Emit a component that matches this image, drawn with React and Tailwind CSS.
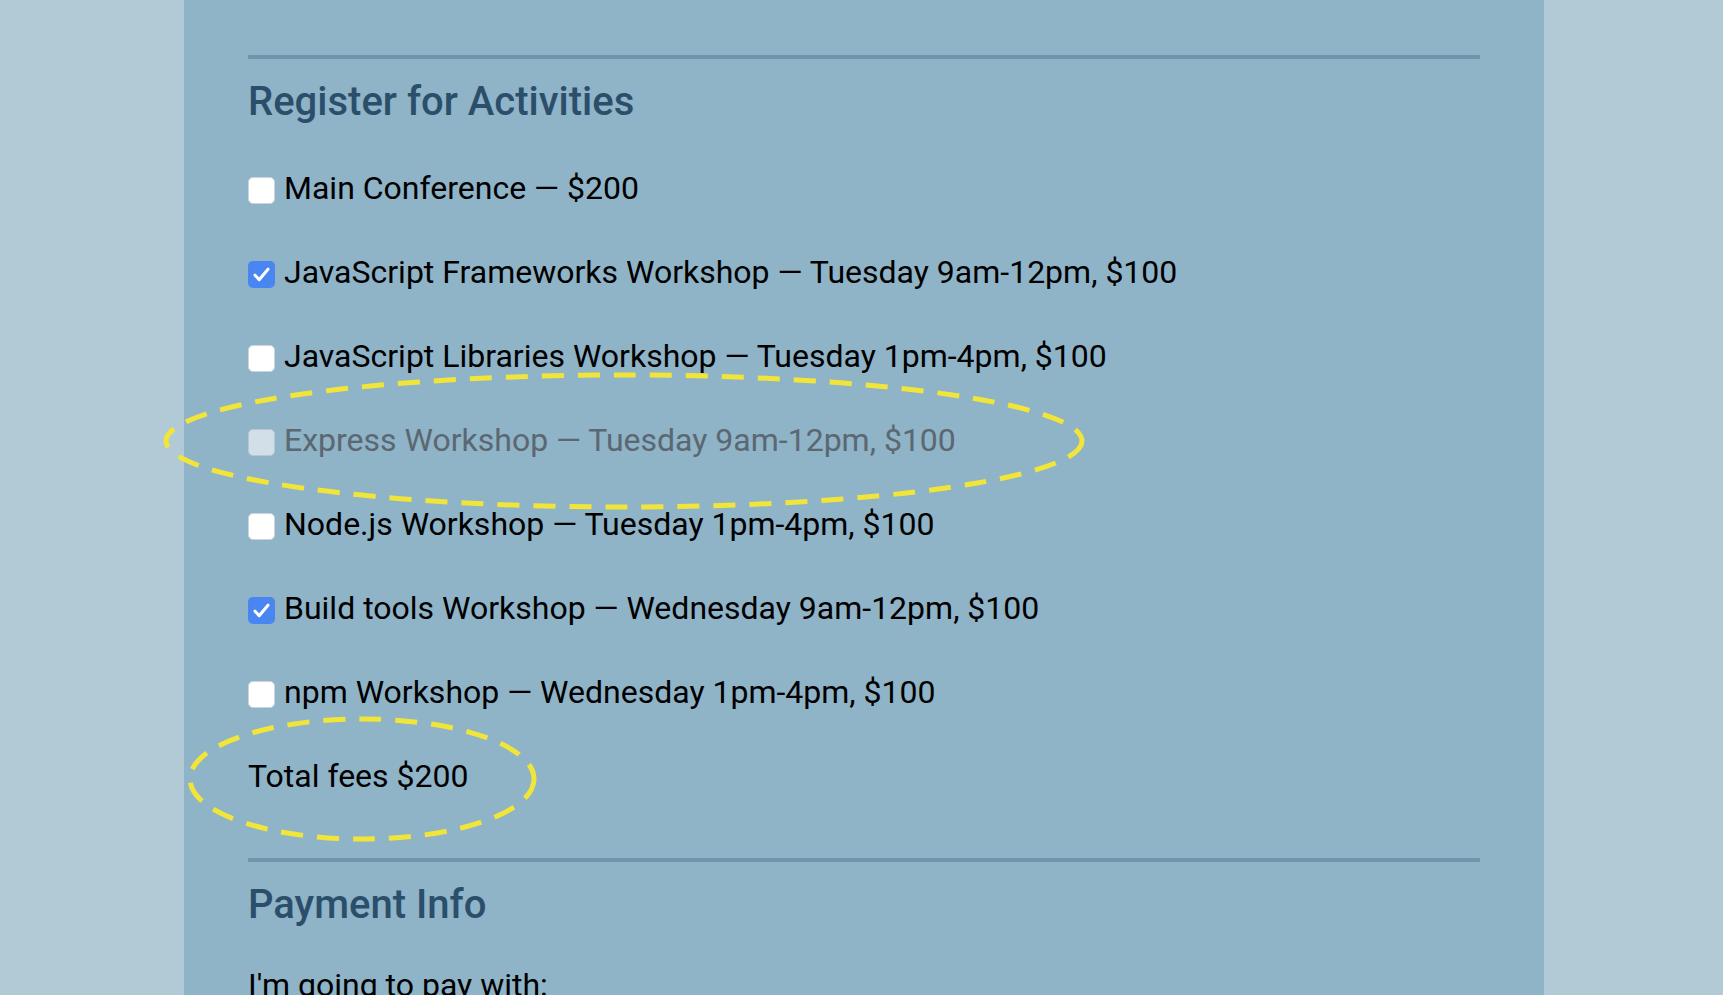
const activities = [
  { label: "Main Conference — $200" },
  { label: "JavaScript Frameworks Workshop — Tuesday 9am-12pm, $100", checked: true },
  { label: "JavaScript Libraries Workshop — Tuesday 1pm-4pm, $100" },
  { label: "Express Workshop — Tuesday 9am-12pm, $100", disabled: true },
  { label: "Node.js Workshop — Tuesday 1pm-4pm, $100" },
  { label: "Build tools Workshop — Wednesday 9am-12pm, $100", checked: true },
  { label: "npm Workshop — Wednesday 1pm-4pm, $100" },
];

const Box = ({ checked, disabled }) => {
  if (checked) {
    return (
      <span className="mt-[5px] flex h-[27px] w-[27px] shrink-0 items-center justify-center rounded-[5px] bg-[#4a86f2]">
        <svg width="27" height="27" viewBox="0 0 27 27" fill="none">
          <path d="M7 14.2l4.2 4.6L20 8.2" stroke="white" strokeWidth="3" strokeLinecap="round" strokeLinejoin="round" />
        </svg>
      </span>
    );
  }
  return (
    <span
      className={
        disabled
          ? "mt-[5px] h-[27px] w-[27px] shrink-0 rounded-[5px] border border-[#b7c8d4] bg-[#d2dfe8]"
          : "mt-[5px] h-[27px] w-[27px] shrink-0 rounded-[5px] border border-[#c9d6de] bg-white"
      }
    />
  );
};

const Heading = ({ children }) => (
  <div className="flex h-[87px] items-center pb-[1px]">
    <h2 className="text-[40px] font-medium leading-none text-[#2b4f6b]">{children}</h2>
  </div>
);

export default function App() {
  return (
    <div className="relative h-[995px] overflow-hidden bg-[#b2c9d6] font-['Roboto',sans-serif]">
      <div className="ml-[184px] h-full w-[1360px] bg-[#8fb3c7] px-[64px] pt-[55px]">
        <div className="h-[4px] bg-[#6f95ad]" />
        <Heading>Register for Activities</Heading>
        {activities.map((a) => (
          <label key={a.label} className="flex h-[84px] items-center gap-[9px]">
            <Box checked={a.checked} disabled={a.disabled} />
            <span className={a.disabled ? "text-[32px] text-[#5b6771]" : "text-[32px] text-black"}>{a.label}</span>
          </label>
        ))}
        <p className="flex h-[84px] items-center text-[32px] text-black">Total fees $200</p>
        <div className="mt-[40px] h-[4px] bg-[#6f95ad]" />
        <Heading>Payment Info</Heading>
        <p className="-mt-[6px] flex h-[84px] items-center text-[32px] text-black">I'm going to pay with:</p>
      </div>
      <svg className="pointer-events-none absolute inset-0" width="1723" height="995">
        <ellipse cx="624" cy="441" rx="458" ry="66" fill="none" stroke="#f2e53a" strokeWidth="5" strokeDasharray="22 14" />
        <ellipse cx="362" cy="779" rx="172" ry="60" fill="none" stroke="#f2e53a" strokeWidth="5" strokeDasharray="22 14" />
      </svg>
    </div>
  );
}
